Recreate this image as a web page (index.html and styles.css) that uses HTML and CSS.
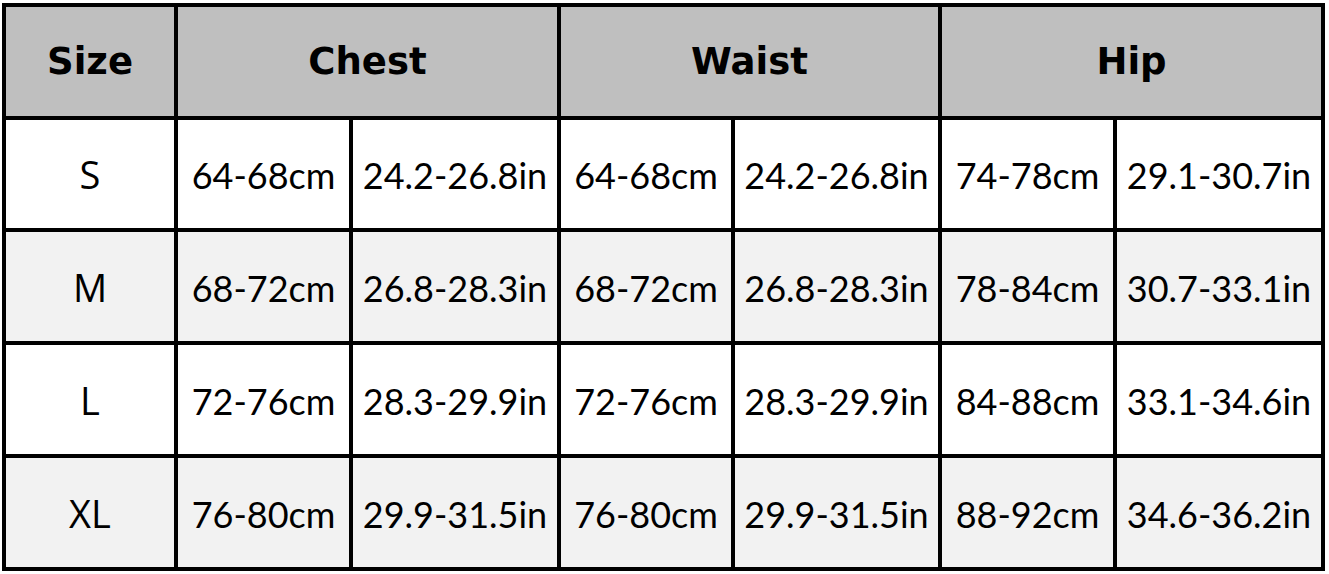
FILE: index.html
```html
<!DOCTYPE html>
<html>
<head>
<meta charset="utf-8">
<link rel="stylesheet" href="styles.css">
</head>
<body>
<div class="chart">
  <div class="cell head">Size</div>
  <div class="cell head span2">Chest</div>
  <div class="cell head span2">Waist</div>
  <div class="cell head span2">Hip</div>

  <div class="cell size">S</div>
  <div class="cell num">64-68cm</div>
  <div class="cell num">24.2-26.8in</div>
  <div class="cell num">64-68cm</div>
  <div class="cell num">24.2-26.8in</div>
  <div class="cell num">74-78cm</div>
  <div class="cell num">29.1-30.7in</div>

  <div class="cell size alt">M</div>
  <div class="cell num alt">68-72cm</div>
  <div class="cell num alt">26.8-28.3in</div>
  <div class="cell num alt">68-72cm</div>
  <div class="cell num alt">26.8-28.3in</div>
  <div class="cell num alt">78-84cm</div>
  <div class="cell num alt">30.7-33.1in</div>

  <div class="cell size">L</div>
  <div class="cell num">72-76cm</div>
  <div class="cell num">28.3-29.9in</div>
  <div class="cell num">72-76cm</div>
  <div class="cell num">28.3-29.9in</div>
  <div class="cell num">84-88cm</div>
  <div class="cell num">33.1-34.6in</div>

  <div class="cell size alt">XL</div>
  <div class="cell num alt">76-80cm</div>
  <div class="cell num alt">29.9-31.5in</div>
  <div class="cell num alt">76-80cm</div>
  <div class="cell num alt">29.9-31.5in</div>
  <div class="cell num alt">88-92cm</div>
  <div class="cell num alt">34.6-36.2in</div>
</div>
</body>
</html>
```
FILE: styles.css
```css
html, body {
  margin: 0;
  padding: 0;
  background: #ffffff;
}

.chart {
  display: grid;
  width: max-content;
  margin: 3px 0 0 2px;
  grid-template-columns: 168px 171px 204px 170px 203px 171px 204px;
  grid-template-rows: 109px 108px 109px 109px 109px;
  gap: 4px;
  padding: 4px;
  background: #000000;
}

.cell {
  background: #ffffff;
  display: flex;
  align-items: center;
  justify-content: center;
  color: #000000;
  white-space: nowrap;
}

.span2 {
  grid-column: span 2;
}

.head {
  background: #bfbfbf;
  font-family: "DejaVu Sans", sans-serif;
  font-weight: bold;
  font-size: 37px;
}

.size {
  font-family: "Open Sans", sans-serif;
  font-size: 38px;
}

.num {
  font-family: "Lato", sans-serif;
  font-size: 36px;
  padding-top: 2px;
}

.alt {
  background: #f2f2f2;
}
```
